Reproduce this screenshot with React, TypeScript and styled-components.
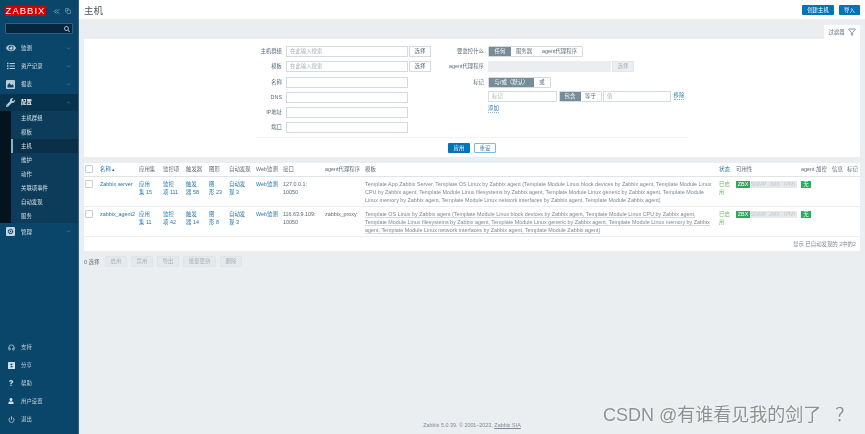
import React from "react";
import styled, { createGlobalStyle } from "styled-components";
import { FaEye, FaList, FaWrench, FaUser, FaQuestion, FaSearch } from "react-icons/fa";
import { ChevronDown, ChevronUp, ChevronsLeft, Filter, Headphones, Power, Copy } from "lucide-react";

const FONT = `"Liberation Sans", "Noto Sans CJK SC", sans-serif`;

const GlobalStyle = createGlobalStyle`
  html, body { margin: 0; padding: 0; background: #ebeef0; }
  * { box-sizing: border-box; }
`;

const ReportIcon = () => (
  <svg width="9" height="9" viewBox="0 0 12 12">
    <rect width="12" height="12" rx="1" fill="#b9cbd8" />
    <path d="M2 10V7l2.5-3 2.5 3 1.5-1.5L10 7v3z" fill="#0a466a" />
  </svg>
);

const AdminIcon = () => (
  <svg width="9" height="9" viewBox="0 0 12 12">
    <rect width="12" height="12" rx="1.5" fill="#c6d5df" />
    <circle cx="6" cy="6" r="2.8" fill="none" stroke="#0a466a" strokeWidth="1.6" strokeDasharray="1.6 .5" />
    <circle cx="6" cy="6" r="1" fill="#0a466a" />
  </svg>
);

const ShareIcon = () => (
  <svg width="7" height="7" viewBox="0 0 12 12">
    <rect width="12" height="12" rx="1" fill="#d3dee6" />
    <path d="M4 3h4.5L5 7h3v2H3.5L7 5H4z" fill="#0a466a" />
  </svg>
);

const NAV_TOP = [
  { label: "监测", icon: <FaEye size={10} /> },
  { label: "资产记录", icon: <FaList size={8} /> },
  { label: "报表", icon: <ReportIcon /> },
];

const SUB_ITEMS = ["主机群组", "模板", "主机", "维护", "动作", "关联项事件", "自动发现", "服务"];

const NAV_BOTTOM = [
  { label: "支持", icon: <Headphones size={7} strokeWidth={2.4} /> },
  { label: "分享", icon: <ShareIcon /> },
  { label: "帮助", icon: <FaQuestion size={6} /> },
  { label: "用户设置", icon: <FaUser size={6} /> },
  { label: "退出", icon: <Power size={7} strokeWidth={2.4} /> },
];

const LEFT_FIELDS = [
  { label: "主机群组", placeholder: "在此输入搜索", select: true },
  { label: "模板", placeholder: "在此输入搜索", select: true },
  { label: "名称" },
  { label: "DNS" },
  { label: "IP地址" },
  { label: "端口" },
];

const TEMPLATES_1 =
  "Template App Zabbix Server, Template OS Linux by Zabbix agent (Template Module Linux block devices by Zabbix agent, Template Module Linux CPU by Zabbix agent, Template Module Linux filesystems by Zabbix agent, Template Module Linux generic by Zabbix agent, Template Module Linux memory by Zabbix agent, Template Module Linux network interfaces by Zabbix agent, Template Module Zabbix agent)";
const TEMPLATES_2 =
  "Template OS Linux by Zabbix agent (Template Module Linux block devices by Zabbix agent, Template Module Linux CPU by Zabbix agent, Template Module Linux filesystems by Zabbix agent, Template Module Linux generic by Zabbix agent, Template Module Linux memory by Zabbix agent, Template Module Linux network interfaces by Zabbix agent, Template Module Zabbix agent)";

const HOSTS = [
  {
    name: "Zabbix server",
    apps: ["应用", "集 15"],
    items: ["监控", "项 111"],
    triggers: ["触发", "器 58"],
    graphs: ["图", "形 23"],
    discovery: ["自动发", "现 3"],
    iface: ["127.0.0.1:", "10050"],
    proxy: "",
    templates: TEMPLATES_1,
    underline: false,
  },
  {
    name: "zabbix_agent2",
    apps: ["应用", "集 11"],
    items: ["监控", "项 42"],
    triggers: ["触发", "器 14"],
    graphs: ["图", "形 8"],
    discovery: ["自动发", "现 3"],
    iface: ["116.63.9.109:", "10050"],
    proxy: "zabbix_proxy",
    templates: TEMPLATES_2,
    underline: true,
  },
];

const COLUMNS = [16, 39, 24, 23, 23, 20, 27, 27, 42, 40, 354, 17, 65, 31, 15, 13];

const Lines = ({ lines }: { lines: string[] }) => (
  <>
    {lines.map((line) => (
      <div key={line}>{line}</div>
    ))}
  </>
);

const App = () => {
  return (
    <Page>
      <GlobalStyle />
      <Sidebar>
        <LogoRow>
          <Logo>ZABBIX</Logo>
          <LogoTools>
            <ChevronsLeft size={9} />
            <Copy size={6} />
          </LogoTools>
        </LogoRow>
        <SearchBox>
          <FaSearch size={6} />
        </SearchBox>
        <NavList>
          {NAV_TOP.map((item) => (
            <NavItem key={item.label}>
              <NavIcon>{item.icon}</NavIcon>
              <span>{item.label}</span>
              <NavCaret>
                <ChevronDown size={5} />
              </NavCaret>
            </NavItem>
          ))}
          <NavItem $active>
            <NavIcon>
              <FaWrench size={9} />
            </NavIcon>
            <span>配置</span>
            <NavCaret>
              <ChevronUp size={5} />
            </NavCaret>
          </NavItem>
          <SubNav>
            {SUB_ITEMS.map((item) => (
              <SubItem key={item} $selected={item === "主机"}>
                {item}
              </SubItem>
            ))}
          </SubNav>
          <NavItem>
            <NavIcon>
              <AdminIcon />
            </NavIcon>
            <span>管理</span>
            <NavCaret>
              <ChevronDown size={5} />
            </NavCaret>
          </NavItem>
        </NavList>
        <BottomNav>
          {NAV_BOTTOM.map((item) => (
            <BottomItem key={item.label}>
              <BottomIcon>{item.icon}</BottomIcon>
              <span>{item.label}</span>
            </BottomItem>
          ))}
        </BottomNav>
      </Sidebar>

      <Main>
        <Header>
          <Title>主机</Title>
          <HeaderActions>
            <PrimaryButton $w={32}>创建主机</PrimaryButton>
            <PrimaryButton $w={21}>导入</PrimaryButton>
          </HeaderActions>
        </Header>

        <Content>
          <FilterTabRow>
            <FilterTab>
              过滤器
              <Filter size={8} color="#5c6f7b" strokeWidth={2.2} />
            </FilterTab>
          </FilterTabRow>
          <FilterPanel>
            <FilterColumns>
              <FieldColumn $labelWidth={198}>
                {LEFT_FIELDS.map((field) => (
                  <React.Fragment key={field.label}>
                    <FieldLabel>{field.label}</FieldLabel>
                    <FieldControls>
                      <TextBox $w={122}>{field.placeholder}</TextBox>
                      {field.select && <SelectButton>选择</SelectButton>}
                    </FieldControls>
                  </React.Fragment>
                ))}
              </FieldColumn>
              <FieldColumn $labelWidth={49}>
                <FieldLabel>要监控什么</FieldLabel>
                <FieldControls>
                  <Segment>
                    <SegmentItem $on $w={22}>任何</SegmentItem>
                    <SegmentItem $w={26}>服务器</SegmentItem>
                    <SegmentItem $w={45}>agent代理程序</SegmentItem>
                  </Segment>
                </FieldControls>
                <FieldLabel>agent代理程序</FieldLabel>
                <FieldControls>
                  <TextBox $w={123} $disabled />
                  <SelectButton $disabled>选择</SelectButton>
                </FieldControls>
                <FieldLabel>标记</FieldLabel>
                <TagColumn>
                  <Segment>
                    <SegmentItem $on $w={45}>与/或（默认）</SegmentItem>
                    <SegmentItem $w={16}>或</SegmentItem>
                  </Segment>
                  <TagRow>
                    <TextBox $w={69}>标记</TextBox>
                    <Segment>
                      <SegmentItem $on $w={21}>包含</SegmentItem>
                      <SegmentItem $w={20}>等于</SegmentItem>
                    </Segment>
                    <TextBox $w={68}>值</TextBox>
                    <FilterLink>移除</FilterLink>
                  </TagRow>
                  <AddLink>添加</AddLink>
                </TagColumn>
              </FieldColumn>
            </FilterColumns>
            <FilterActions>
              <PrimaryButton $w={22}>应用</PrimaryButton>
              <OutlineButton>重设</OutlineButton>
            </FilterActions>
          </FilterPanel>

          <HostTable>
            <colgroup>
              {COLUMNS.map((w, i) => (
                <col key={i} style={{ width: w }} />
              ))}
            </colgroup>
            <thead>
              <tr>
                <th><CheckBox /></th>
                <HeadLink>名称 ▴</HeadLink>
                <th>应用集</th>
                <th>监控项</th>
                <th>触发器</th>
                <th>图形</th>
                <th>自动发现</th>
                <th>Web监测</th>
                <th>接口</th>
                <th>agent代理程序</th>
                <th>模板</th>
                <HeadLink>状态</HeadLink>
                <th>可用性</th>
                <th>agent 加密</th>
                <th>信息</th>
                <th>标记</th>
              </tr>
            </thead>
            <tbody>
              {HOSTS.map((host) => (
                <tr key={host.name}>
                  <td><CheckBox /></td>
                  <LinkCell>{host.name}</LinkCell>
                  <LinkCell><Lines lines={host.apps} /></LinkCell>
                  <LinkCell><Lines lines={host.items} /></LinkCell>
                  <LinkCell><Lines lines={host.triggers} /></LinkCell>
                  <LinkCell><Lines lines={host.graphs} /></LinkCell>
                  <LinkCell><Lines lines={host.discovery} /></LinkCell>
                  <LinkCell>Web监测</LinkCell>
                  <td><Lines lines={host.iface} /></td>
                  <td>{host.proxy}</td>
                  <TemplateCell $underline={host.underline}>
                    <span>{host.templates}</span>
                  </TemplateCell>
                  <StatusCell><Lines lines={["已启", "用"]} /></StatusCell>
                  <td>
                    <Availability>
                      <Pill $on $w={14}>ZBX</Pill>
                      <Pill $w={17}>SNMP</Pill>
                      <Pill $w={15}>JMX</Pill>
                      <Pill $w={15}>IPMI</Pill>
                    </Availability>
                  </td>
                  <td><Availability><Pill $on $w={10}>无</Pill></Availability></td>
                  <td />
                  <td />
                </tr>
              ))}
              <tr>
                <SummaryCell colSpan={16}>显示 已自动发现的 2中的2</SummaryCell>
              </tr>
            </tbody>
          </HostTable>

          <ActionBar>
            <SelectedCount>0 选择</SelectedCount>
            <GhostButton $w={22}>启用</GhostButton>
            <GhostButton $w={22}>禁用</GhostButton>
            <GhostButton $w={22}>导出</GhostButton>
            <GhostButton $w={33}>批量更新</GhostButton>
            <GhostButton $w={22}>删除</GhostButton>
          </ActionBar>
        </Content>

        <Footer>
          Zabbix 5.0.39. © 2001–2023, <u>Zabbix SIA</u>
        </Footer>
      </Main>
      <Watermark>
        CSDN @有谁看见我的剑了<WatermarkMark>？</WatermarkMark>
      </Watermark>
    </Page>
  );
};

const Page = styled.div`
  position: relative;
  display: flex;
  width: 865px;
  height: 434px;
  overflow: hidden;
  font-family: ${FONT};
  font-size: 5.4px;
  color: #5b6b76;
  background: #ebeef0;
  filter: blur(0.35px);
`;

const Sidebar = styled.aside`
  display: flex;
  flex-direction: column;
  flex: 0 0 79px;
  background: #0a466a;
  border-right: 1px solid #2a6285;
  color: #d5e0e8;
`;

const LogoRow = styled.div`
  display: flex;
  align-items: center;
  justify-content: space-between;
  height: 10px;
  margin: 6px 5px 0 5px;
`;

const Logo = styled.div`
  width: 41px;
  height: 10px;
  background: #d40000;
  color: #fff;
  font-size: 9.5px;
  line-height: 10px;
  letter-spacing: 1px;
  text-align: center;
`;

const LogoTools = styled.div`
  display: flex;
  align-items: center;
  gap: 4px;
  margin-right: 2px;
  color: #a9bfce;
`;

const SearchBox = styled.div`
  display: flex;
  align-items: center;
  justify-content: flex-end;
  height: 11px;
  margin: 7px 5px 0 5px;
  padding-right: 2px;
  border: 1px solid #2a6285;
  border-radius: 1px;
  background: #05263c;
  color: #9fb6c5;
`;

const NavList = styled.nav`
  display: flex;
  flex-direction: column;
  margin-top: 5px;
`;

const NavItem = styled.div<{ $active?: boolean }>`
  display: flex;
  align-items: center;
  height: ${(p) => (p.$active ? "17.2px" : "18.2px")};
  padding: 0 7px 0 5px;
  background: ${(p) => (p.$active ? "#08334f" : "transparent")};
  color: ${(p) => (p.$active ? "#f2f5f7" : "#d5e0e8")};
  font-weight: ${(p) => (p.$active ? 700 : 400)};
`;

const NavIcon = styled.span`
  display: flex;
  justify-content: center;
  width: 11px;
  margin-right: 5px;
  color: #b9cbd8;
`;

const NavCaret = styled.span`
  display: flex;
  margin-left: auto;
  color: #8aa6b8;
`;

const SubNav = styled.div`
  padding-left: 11px;
  background: #04141f;
`;

const SubItem = styled.div<{ $selected?: boolean }>`
  display: flex;
  align-items: center;
  height: 14px;
  padding-left: 8px;
  background: ${(p) => (p.$selected ? "#0a2f49" : "#0d3c5a")};
  border-left: 2px solid ${(p) => (p.$selected ? "#7fb3d5" : "transparent")};
  color: #d5e0e8;
`;

const BottomNav = styled.div`
  display: flex;
  flex-direction: column;
  margin-top: auto;
  margin-bottom: 6px;
`;

const BottomItem = styled.div`
  display: flex;
  align-items: center;
  height: 18px;
  padding-left: 7px;
  color: #c2d2dd;
`;

const BottomIcon = styled.span`
  display: flex;
  justify-content: center;
  width: 8px;
  margin-right: 6px;
  color: #d3dee6;
`;

const Main = styled.main`
  display: flex;
  flex: 1;
  flex-direction: column;
  min-width: 0;
`;

const Header = styled.header`
  display: flex;
  align-items: center;
  justify-content: space-between;
  height: 19px;
  padding: 0 5px;
  background: #ffffff;
`;

const Title = styled.h1`
  margin: 0;
  font-size: 9.5px;
  font-weight: 400;
  color: #4a5a65;
`;

const HeaderActions = styled.div`
  display: flex;
  gap: 5px;
`;

const PrimaryButton = styled.div<{ $w: number }>`
  width: ${(p) => p.$w}px;
  height: 10px;
  background: #0275b8;
  border-radius: 1px;
  color: #ffffff;
  font-size: 5.4px;
  line-height: 10px;
  text-align: center;
`;

const OutlineButton = styled.div`
  width: 22px;
  height: 10px;
  border: 1px solid #7fb8da;
  border-radius: 1px;
  background: #fff;
  color: #2c7fb5;
  line-height: 8px;
  text-align: center;
`;

const Content = styled.div`
  display: flex;
  flex-direction: column;
  padding: 0 5px;
`;

const FilterTabRow = styled.div`
  display: flex;
  justify-content: flex-end;
  height: 20px;
  padding-top: 6px;
`;

const FilterTab = styled.div`
  display: flex;
  align-items: center;
  justify-content: center;
  gap: 3px;
  width: 36px;
  background: #ffffff;
`;

const FilterPanel = styled.section`
  display: flex;
  flex-direction: column;
  height: 118px;
  background: #ffffff;
`;

const FilterColumns = styled.div`
  display: flex;
  height: 98px;
  padding-top: 7px;
`;

const FieldColumn = styled.div<{ $labelWidth: number }>`
  display: grid;
  flex: 0 0 auto;
  grid-template-columns: ${(p) => p.$labelWidth}px auto;
  grid-auto-rows: min-content;
  column-gap: 4px;
  row-gap: 4.3px;
  width: ${(p) => (p.$labelWidth > 100 ? "351px" : "auto")};
`;

const FieldLabel = styled.div`
  height: 11px;
  line-height: 10px;
  text-align: right;
  white-space: nowrap;
`;

const FieldControls = styled.div`
  display: flex;
  gap: 1px;
  align-items: center;
`;

const TextBox = styled.div<{ $w: number; $disabled?: boolean }>`
  width: ${(p) => p.$w}px;
  height: 11px;
  padding-left: 3px;
  border: 1px solid ${(p) => (p.$disabled ? "#ebeef0" : "#d3dbe0")};
  background: ${(p) => (p.$disabled ? "#ebeef0" : "#ffffff")};
  color: #a6b1b9;
  line-height: 9px;
`;

const SelectButton = styled.div<{ $disabled?: boolean }>`
  width: 22px;
  height: 11px;
  border: 1px solid ${(p) => (p.$disabled ? "#e3e7ea" : "#d3dbe0")};
  background: ${(p) => (p.$disabled ? "#ebeef0" : "#ffffff")};
  color: ${(p) => (p.$disabled ? "#a6b1b9" : "#5b6b76")};
  line-height: 9px;
  text-align: center;
`;

const TagColumn = styled.div`
  display: flex;
  flex-direction: column;
  gap: 3px;
`;

const TagRow = styled.div`
  display: flex;
  align-items: center;
  gap: 1.5px;
`;

const Segment = styled.div`
  display: flex;
  align-self: flex-start;
  height: 11px;
  border: 1px solid #d3dbe0;
  border-radius: 1px;
`;

const SegmentItem = styled.div<{ $on?: boolean; $w: number }>`
  width: ${(p) => p.$w}px;
  background: ${(p) => (p.$on ? "#768d99" : "#ffffff")};
  color: ${(p) => (p.$on ? "#ffffff" : "#5b6b76")};
  line-height: 9px;
  text-align: center;
  white-space: nowrap;
`;

const FilterLink = styled.span`
  align-self: flex-start;
  margin-left: 1px;
  color: #2c7fb5;
  line-height: 8px;
  border-bottom: 1px dotted #7fb8da;
`;

const AddLink = styled(FilterLink)`
  margin-top: -1px;
  margin-left: 0;
`;

const FilterActions = styled.div`
  display: flex;
  justify-content: center;
  gap: 4px;
  margin: 0 171px;
  padding-top: 4.5px;
  border-top: 1px solid #f2f4f5;
`;

const HostTable = styled.table`
  width: 776px;
  margin-top: 6px;
  border-collapse: collapse;
  table-layout: fixed;
  background: #ffffff;

  th {
    height: 13px;
    padding: 0;
    border-bottom: 1px solid #dfe4e7;
    font-weight: 400;
    text-align: left;
    white-space: nowrap;
    vertical-align: middle;
  }

  td {
    height: 30px;
    padding: 3px 0 0;
    border-bottom: 1px solid #ebeef0;
    line-height: 8px;
    white-space: nowrap;
    vertical-align: top;
  }
`;

const HeadLink = styled.th`
  color: #1f73ad;
`;

const CheckBox = styled.div`
  width: 8px;
  height: 8px;
  margin-left: 1px;
  border: 1px solid #c6ced3;
  border-radius: 1px;
  background: #fff;
`;

const LinkCell = styled.td`
  color: #1f73ad;
`;

const TemplateCell = styled.td<{ $underline: boolean }>`
  padding-right: 6px !important;
  white-space: normal !important;
  color: #7d8a93;

  span {
    border-bottom: ${(p) => (p.$underline ? "1px solid #d5dbdf" : "none")};
  }
`;

const StatusCell = styled.td`
  color: #6fb85f;
`;

const Availability = styled.div`
  display: flex;
  margin-top: 1px;
`;

const Pill = styled.span<{ $on?: boolean; $w: number }>`
  width: ${(p) => p.$w}px;
  height: 7px;
  background: ${(p) => (p.$on ? "#2bab5d" : "#e6e9eb")};
  color: ${(p) => (p.$on ? "#ffffff" : "#c3cacf")};
  font-size: 5.4px;
  line-height: 7px;
  text-align: center;
`;

const SummaryCell = styled.td`
  height: 15px !important;
  padding: 0 4px 0 0 !important;
  border-bottom: none !important;
  text-align: right;
  vertical-align: middle !important;
  color: #7d8a93;
`;

const ActionBar = styled.div`
  display: flex;
  align-items: center;
  height: 11px;
  margin-top: 5px;
  gap: 4px;
`;

const SelectedCount = styled.span`
  width: 17px;
`;

const GhostButton = styled.div<{ $w: number }>`
  width: ${(p) => p.$w}px;
  height: 11px;
  border: 1px solid #dfe4e7;
  border-radius: 1px;
  background: #e6e9eb;
  color: #a6b1b9;
  line-height: 9px;
  text-align: center;
`;

const Footer = styled.footer`
  margin-top: auto;
  padding-bottom: 6px;
  color: #7d8a93;
  text-align: center;
`;

const Watermark = styled.div`
  position: absolute;
  left: 603px;
  top: 404px;
  color: #909090;
  font-size: 18px;
  line-height: 22px;
  white-space: nowrap;
  text-shadow: 0 0 2px #ffffff;
`;

const WatermarkMark = styled.span`
  margin-left: 14px;
`;

export default App;
